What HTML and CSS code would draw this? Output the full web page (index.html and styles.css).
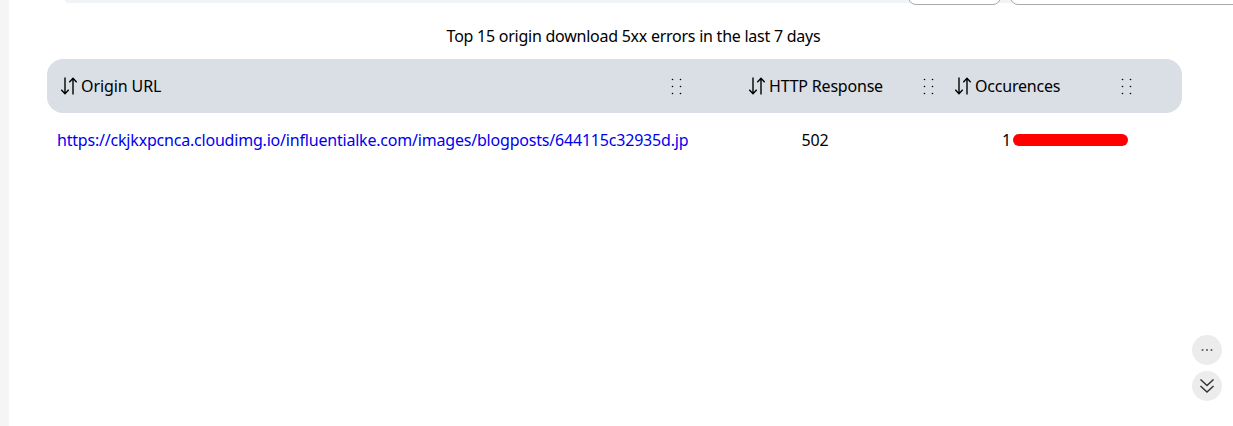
FILE: index.html
```html
<!DOCTYPE html>
<html lang="en">
<head>
    <meta charset="UTF-8">
    <title>Origin errors</title>
    <link rel="stylesheet" href="styles.css">
</head>
<body>
<div class="page">
    <aside class="rail"></aside>
    <main class="content">
        <div class="topbar">
            <div class="search">
                <div class="btn btn-small"></div>
                <div class="btn btn-wide"></div>
            </div>
        </div>
        <h2 class="title">Top 15 origin download 5xx errors in the last 7 days</h2>
        <div class="report">
            <div class="head">
                <div class="th col-url">
                    <svg class="sort" viewBox="0 0 18 18"><path d="M5 0.500v16M1.300 12.800L5 16.700l3.700-3.900M13 17.500v-16M9.300 5.200L13 1.300l3.700 3.900" fill="none" stroke="#000" stroke-width="1.400"/></svg>
                    <span class="label-url">Origin URL</span>
                    <svg class="grip" viewBox="0 0 12 18"><g fill="#000"><circle cx="2.500" cy="2.500" r=".8"/><circle cx="10.500" cy="2.500" r=".8"/><circle cx="2.500" cy="9.500" r=".8"/><circle cx="10.500" cy="9.500" r=".8"/><circle cx="2.500" cy="16.500" r=".8"/><circle cx="10.500" cy="16.500" r=".8"/></g></svg>
                </div>
                <div class="th col-code">
                    <svg class="sort" viewBox="0 0 18 18"><path d="M5 0.500v16M1.300 12.800L5 16.700l3.700-3.900M13 17.500v-16M9.300 5.200L13 1.300l3.700 3.900" fill="none" stroke="#000" stroke-width="1.400"/></svg>
                    <span>HTTP Response</span>
                    <svg class="grip" viewBox="0 0 12 18"><g fill="#000"><circle cx="2.500" cy="2.500" r=".8"/><circle cx="10.500" cy="2.500" r=".8"/><circle cx="2.500" cy="9.500" r=".8"/><circle cx="10.500" cy="9.500" r=".8"/><circle cx="2.500" cy="16.500" r=".8"/><circle cx="10.500" cy="16.500" r=".8"/></g></svg>
                </div>
                <div class="th col-count">
                    <svg class="sort" viewBox="0 0 18 18"><path d="M5 0.500v16M1.300 12.800L5 16.700l3.700-3.900M13 17.500v-16M9.300 5.200L13 1.300l3.700 3.900" fill="none" stroke="#000" stroke-width="1.400"/></svg>
                    <span>Occurences</span>
                    <svg class="grip" viewBox="0 0 12 18"><g fill="#000"><circle cx="2.500" cy="2.500" r=".8"/><circle cx="10.500" cy="2.500" r=".8"/><circle cx="2.500" cy="9.500" r=".8"/><circle cx="10.500" cy="9.500" r=".8"/><circle cx="2.500" cy="16.500" r=".8"/><circle cx="10.500" cy="16.500" r=".8"/></g></svg>
                </div>
            </div>
            <div class="row">
                <div class="td-url"><a href="#">https://ckjkxpcnca.cloudimg.io/influentialke.com/images/blogposts/644115c32935d.jpg</a></div>
                <div class="td-code">502</div>
                <div class="td-count"><span>1</span><span class="bar"></span></div>
            </div>
        </div>
    </main>
</div>
<div class="float-btns">
    <button class="round">
        <svg viewBox="0 0 16 16" width="16" height="16"><g fill="#555"><circle cx="3.500" cy="8" r="1"/><circle cx="8" cy="8" r="1"/><circle cx="12.500" cy="8" r="1"/></g></svg>
    </button>
    <button class="round">
        <svg viewBox="0 0 18 18" width="18" height="18"><path d="M2.500 2.500L9 8.500l6.500-6M2.500 9L9 15l6.500-6" fill="none" stroke="#333" stroke-width="1.500"/></svg>
    </button>
</div>
</body>
</html>
```

FILE: styles.css
```css
* {
    margin: 0;
    padding: 0;
    box-sizing: border-box;
}
html, body {
    height: 100%;
    overflow: hidden;
}
body {
    background: #fff;
    color: #000;
    font-family: "Noto Sans", sans-serif;
    font-size: 16px;
    letter-spacing: -0.2px;
}
.page {
    display: flex;
    height: 426px;
}
.rail {
    width: 9px;
    background: #f5f5f5;
}
.content {
    flex: 1;
    min-width: 0;
}
.topbar {
    height: 6px;
    overflow: hidden;
}
.search {
    display: flex;
    justify-content: flex-end;
    gap: 9px;
    height: 3px;
    margin-left: 56px;
    background: #f1f4f7;
    border-radius: 0 0 0 10px;
}
.btn {
    flex-shrink: 0;
    background: #fff;
    border: 1px solid #aaa;
    border-radius: 10px;
    height: 16px;
    margin-top: -11px;
}
.btn-small {
    width: 93px;
}
.btn-wide {
    width: 240px;
    margin-right: -17px;
}
.title {
    font-size: 16px;
    font-weight: 400;
    line-height: 22px;
    letter-spacing: -0.25px;
    text-align: center;
    margin-top: 19px;
    padding-left: 25px;
    width: 1224px;
}
.report {
    margin: 12px 0 0 38px;
    width: 1135px;
}
.head {
    display: flex;
    height: 54px;
    background: #d9dfe5;
    border-radius: 16px;
}
.th {
    display: flex;
    align-items: center;
    white-space: nowrap;
}
.col-url { width: 643px; padding-left: 13px; }
.col-code { width: 259px; padding-left: 58px; }
.col-count { flex: 1; padding-left: 5px; }
.label-url { letter-spacing: -0.1px; }
.sort {
    width: 18px;
    height: 18px;
    margin-right: 3px;
}
.grip {
    width: 12px;
    height: 18px;
    margin-left: auto;
}
.col-url .grip { margin-right: 8px; }
.col-code .grip { margin-right: 15px; }
.col-count .grip { margin-right: 50px; }
.row {
    display: flex;
    align-items: center;
    height: 54px;
    padding-left: 10px;
}
.td-url {
    width: 631px;
    overflow: hidden;
    white-space: nowrap;
}
.td-url a {
    color: #0000ee;
    text-decoration: none;
}
.td-code {
    width: 254px;
    text-align: center;
}
.td-count {
    flex: 1;
    display: flex;
    align-items: center;
    gap: 2px;
    padding-left: 60px;
}
.bar {
    width: 115px;
    height: 12px;
    background: #f00;
    border-radius: 6px;
}
.float-btns {
    position: absolute;
    right: 11px;
    top: 335px;
    display: flex;
    flex-direction: column;
    gap: 6px;
}
.round {
    width: 30px;
    height: 30px;
    border: 0;
    border-radius: 50%;
    background: #ececec;
    display: flex;
    align-items: center;
    justify-content: center;
}
```
